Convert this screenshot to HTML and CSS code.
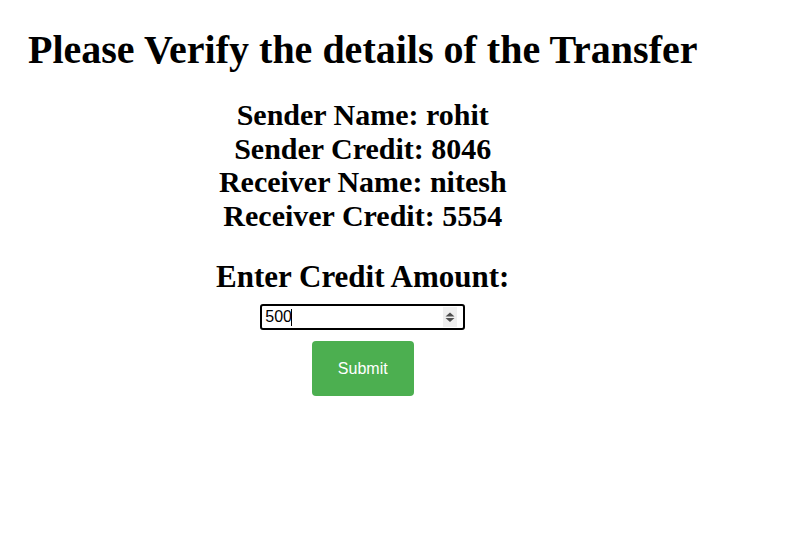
FILE: index.html
```html
<!DOCTYPE html>
<html>
<head>
<meta charset="utf-8">
<link rel="stylesheet" href="styles.css">
</head>
<body>
<div class="wrap">
  <h1 class="title">Please Verify the details of the Transfer</h1>
  <div class="details">
    <div class="line">Sender Name: rohit</div>
    <div class="line">Sender Credit: 8046</div>
    <div class="line">Receiver Name: nitesh</div>
    <div class="line">Receiver Credit: 5554</div>
  </div>
  <form class="form">
    <label class="label" for="amt">Enter Credit Amount:</label>
    <div class="field">
      <input id="amt" class="amount" type="number" value="500">
      <span class="caret" aria-hidden="true"></span>
      <span class="spin" aria-hidden="true">
        <svg width="14" height="20" viewBox="0 0 14 20"><path d="M7 5.5 L11.5 9.5 L2.5 9.5 Z M2.5 11 L11.5 11 L7 15 Z" fill="#505050"/></svg>
      </span>
    </div>
    <button class="submit" type="button">Submit</button>
  </form>
</div>
</body>
</html>
```
FILE: styles.css
```css
body {
  margin: 8px;
  font-family: "Liberation Serif", "Times New Roman", serif;
  color: #000;
  background: #fff;
}
.wrap {
  display: inline-block;
  padding-left: 20px;
}
.title {
  font-size: 40px;
  font-weight: bold;
  margin: 19px 0 0 0;
  line-height: 46px;
}
.details {
  text-align: center;
  font-size: 30px;
  font-weight: bold;
  margin-top: 25px;
}
.line {
  line-height: 33.5px;
}
.form {
  text-align: center;
  margin-top: 28px;
}
.label {
  display: block;
  font-size: 31px;
  font-weight: bold;
  line-height: 34px;
}
.field {
  position: relative;
  width: 205px;
  margin: 10px auto 0;
}
.amount {
  display: block;
  width: 205px;
  height: 26px;
  box-sizing: border-box;
  border: 2px solid #000;
  border-radius: 3px;
  padding: 0 3px;
  font-family: "Liberation Sans", Arial, sans-serif;
  font-size: 16px;
  color: #000;
  outline: none;
  -moz-appearance: textfield;
}
.amount::-webkit-inner-spin-button,
.amount::-webkit-outer-spin-button {
  -webkit-appearance: none;
  margin: 0;
}
.caret {
  position: absolute;
  left: 31px;
  top: 5px;
  width: 1px;
  height: 17px;
  background: #000;
}
.spin {
  position: absolute;
  top: 3px;
  right: 8px;
  width: 14px;
  height: 20px;
  background: #efefef;
  display: flex;
}
.submit {
  display: block;
  margin: 11px auto 0;
  width: 102px;
  height: 55px;
  background: #4caf50;
  color: #fff;
  border: none;
  border-radius: 4px;
  font-family: "Liberation Sans", Arial, sans-serif;
  font-size: 16px;
}
```
